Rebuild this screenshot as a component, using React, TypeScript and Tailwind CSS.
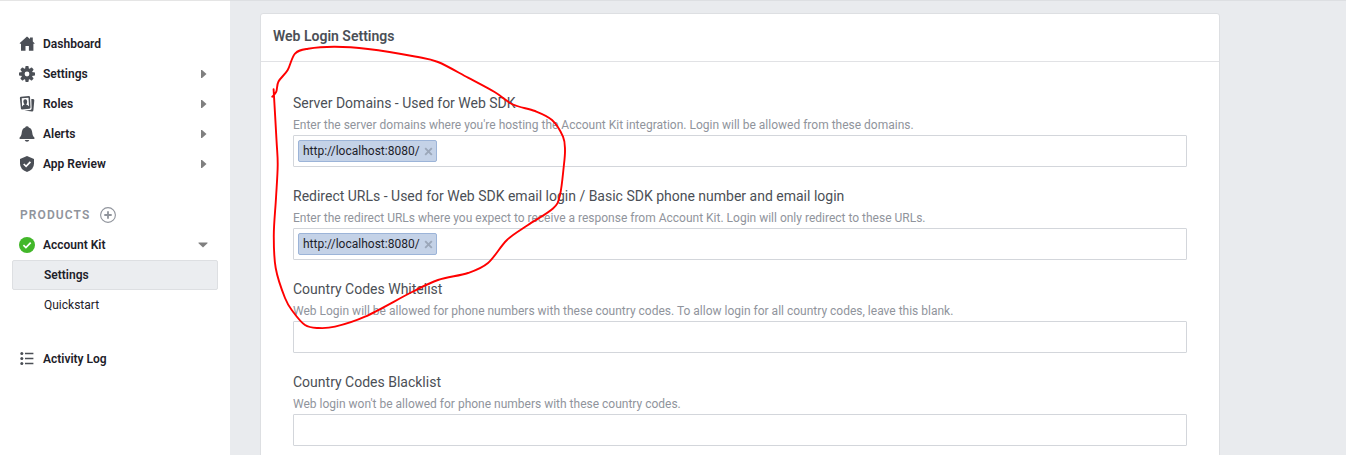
import type { ReactNode } from 'react';

const HomeIcon = () => (
  <svg width="16" height="16" viewBox="0 0 16 16" fill="#4b4f56">
    <path d="M8 0.4 11 3V1.4h2.8v4L15.6 7.2v.6h-1.200v7H9.900V10H6.500v4.800H2V7.800H.8v-.7z" />
  </svg>
);

const GearIcon = () => (
  <svg width="16" height="16" viewBox="0 0 16 16">
    <g fill="#4b4f56">
      <rect x="6.3" y="0" width="3.4" height="16" rx="0.9" />
      <rect x="6.3" y="0" width="3.4" height="16" rx="0.9" transform="rotate(45 8 8)" />
      <rect x="6.3" y="0" width="3.4" height="16" rx="0.9" transform="rotate(90 8 8)" />
      <rect x="6.3" y="0" width="3.4" height="16" rx="0.9" transform="rotate(135 8 8)" />
      <circle cx="8" cy="8" r="5.9" />
    </g>
    <circle cx="8" cy="8" r="2.4" fill="#fff" />
  </svg>
);

const RolesIcon = () => (
  <svg width="16" height="16" viewBox="0 0 16 16">
    <path d="M2 .7 9.800 0q1.100 0 1.200 1l.5 10.600q0 1.100-1 1.200l-7.500.7q-1 0-1.100-1L.9 1.900Q.9.800 2 .7z" fill="#4b4f56" />
    <path d="M2.700 2.200 9.500 1.700l.5 8.600-1.600-1.300-1.300-.6q1.200-1 1.100-2.900Q8 3.200 6.200 3.300 4.300 3.400 4.300 5.500q.1 2 1.300 3L4.300 9.100l-1.200 1.700z" fill="#fff" />
    <path d="M12.300 3h1.800q1.300.2 1.200 1.300l-.9 10q-.2 1.400-1.400 1.300l-7.600-1 5.800-.5q1.400-.2 1.400-1.600z" fill="#4b4f56" />
  </svg>
);

const BellIcon = () => (
  <svg width="16" height="16" viewBox="0 0 16 16" fill="#4b4f56">
    <path d="M8 .2Q9.500.2 9.800 1.500c2.500.8 3.300 3 3.500 5.400.2 2.200 1 3.400 2.100 4.700v1.500H.6v-1.500C1.700 10.300 2.500 9.100 2.700 6.900c.2-2.400 1-4.600 3.500-5.400Q6.500.2 8 .2zM5.700 14h4.600Q9.800 15.700 8 15.700T5.700 14z" />
  </svg>
);

const ShieldIcon = () => (
  <svg width="16" height="16" viewBox="0 0 16 16">
    <path d="M8 .1 15 3v4.500q0 6-7 8.400Q1 13.500 1 7.500V3z" fill="#4b4f56" />
    <path d="m4.700 8 2.400 2.300 4.300-4.500" fill="none" stroke="#fff" strokeWidth="1.700" />
  </svg>
);

const CheckIcon = () => (
  <svg width="16" height="16" viewBox="0 0 16 16">
    <circle cx="8" cy="8" r="8" fill="#42b72a" />
    <path d="m4.400 8.200 2.500 2.400 4.800-4.900" fill="none" stroke="#fff" strokeWidth="1.700" />
  </svg>
);

const ListIcon = () => (
  <svg width="16" height="16" viewBox="0 0 16 16">
    <g fill="#4b4f56">
      <circle cx="2.800" cy="2.500" r="1.500" />
      <circle cx="2.800" cy="7.500" r="1.500" />
      <circle cx="2.800" cy="12.500" r="1.500" />
      <path d="M6 1.800h8.400v1.400H6zM6 6.800h8.400v1.400H6zM6 11.800h8.400v1.400H6z" />
    </g>
  </svg>
);

const PlusIcon = () => (
  <svg width="16" height="16" viewBox="0 0 16 16" fill="none">
    <circle cx="8" cy="8" r="7.400" stroke="#90949c" strokeWidth="1.100" />
    <path d="M8 4.300v7.400M4.300 8h7.400" stroke="#90949c" strokeWidth="1.800" />
  </svg>
);

const RightArrow = () => (
  <svg className="ml-auto mr-[11px]" width="6" height="8" viewBox="0 0 6 8">
    <path d="M0 0h1l4.500 4L1 8H0z" fill="#7f7f7f" />
  </svg>
);

const DownArrow = () => (
  <svg className="ml-auto mr-2.5" width="10" height="6" viewBox="0 0 10 6">
    <path d="M.5.500h9v.8L5 5.500.5 1.300z" fill="#7f7f7f" />
  </svg>
);

function NavRow({ icon, label, arrow }: { icon: ReactNode; label: string; arrow?: ReactNode }) {
  return (
    <div className="flex h-[30px] items-center pl-[7px]">
      {icon}
      <span className="ml-2 font-semibold">{label}</span>
      {arrow}
    </div>
  );
}

function Tag({ text }: { text: string }) {
  return (
    <span className="flex h-[22px] w-[139px] items-center rounded-[2px] border border-[#9cb4d8] bg-[#c4d2e7] pl-1 text-[12px] leading-4 text-[#1d2129]">
      {text}
      <svg className="ml-1" width="9" height="9" viewBox="0 0 9 9">
        <path d="m1.200 1.200 6.600 6.600m0-6.600L1.200 7.800" stroke="#9ba7b9" strokeWidth="1.900" />
      </svg>
    </span>
  );
}

function Field({ label, hint, tag }: { label: string; hint: string; tag?: string }) {
  return (
    <div className="h-[93px]">
      <div className="h-6 text-[14px] leading-5 text-[#4b4f56]">{label}</div>
      <div className="h-[18px] text-[12px] leading-4 text-[#90949c]">{hint}</div>
      <div className="flex h-8 items-center rounded-[1px] border border-[#d3d6db] pl-1">{tag && <Tag text={tag} />}</div>
    </div>
  );
}

const strokePoints: [number, number][] = [
  [272.3, 96.7], [276.3, 91.7], [278.5, 81.5], [287.7, 70], [295, 53.6], [308, 48.7], [335, 46.7], [368, 49],
  [415, 56.5], [438, 62], [468, 77.7], [495, 92.3], [513, 104.5], [535, 111], [552, 120], [563, 136.7],
  [565, 150], [563.8, 166], [560, 195], [553, 208.5], [528, 225], [507, 240], [488, 263], [468, 273],
  [438, 280], [412, 292], [365, 316.7], [335, 326.7], [318, 328], [305, 325], [293, 311.7], [285, 298],
  [275.7, 268], [273.8, 235], [276, 198], [277.7, 165], [276.5, 140], [273.6, 89.3],
];

function smoothPath(pts: [number, number][]) {
  let d = `M${pts[0][0]} ${pts[0][1]}`;
  for (let i = 0; i < pts.length - 1; i++) {
    const a = pts[Math.max(0, i - 1)];
    const b = pts[i];
    const c = pts[i + 1];
    const e = pts[Math.min(pts.length - 1, i + 2)];
    d += `C${b[0] + (c[0] - a[0]) / 6} ${b[1] + (c[1] - a[1]) / 6} ${c[0] - (e[0] - b[0]) / 6} ${c[1] - (e[1] - b[1]) / 6} ${c[0]} ${c[1]}`;
  }
  return d;
}

export default function App() {
  return (
    <div className="relative flex h-[455px] w-[1346px] overflow-hidden bg-[#e9ebee] font-[Roboto,sans-serif] text-[12px] text-[#1d2129]">
      <nav className="w-[230px] shrink-0 border-t border-[#e5e5e5] bg-white px-3 pt-7">
        <NavRow icon={<HomeIcon />} label="Dashboard" />
        <NavRow icon={<GearIcon />} label="Settings" arrow={<RightArrow />} />
        <NavRow icon={<RolesIcon />} label="Roles" arrow={<RightArrow />} />
        <NavRow icon={<BellIcon />} label="Alerts" arrow={<RightArrow />} />
        <NavRow icon={<ShieldIcon />} label="App Review" arrow={<RightArrow />} />
        <div className="mt-5 flex h-[31px] items-center pl-2">
          <span className="w-20 font-semibold tracking-[1.1px] text-[#90949c]">PRODUCTS</span>
          <PlusIcon />
        </div>
        <NavRow icon={<CheckIcon />} label="Account Kit" arrow={<DownArrow />} />
        <div className="flex h-[30px] items-center rounded-[2px] border border-[#dddfe2] bg-[#ebedf0] pl-[31px] font-semibold">Settings</div>
        <div className="flex h-[30px] items-center pl-8">Quickstart</div>
        <div className="mt-6">
          <NavRow icon={<ListIcon />} label="Activity Log" />
        </div>
      </nav>
      <main className="flex-1 border-t border-[#dddfe2] pl-[30px] pt-3">
        <section className="h-[500px] w-[960px] rounded-[3px] border border-[#dddfe2] bg-white">
          <h2 className="flex h-12 items-center border-b border-[#e1e2e5] pb-0.5 pl-3 text-[14px] font-semibold text-[#4b4f56]">Web Login Settings</h2>
          <div className="px-8 pt-[31px]">
            <Field
              label="Server Domains - Used for Web SDK"
              hint="Enter the server domains where you're hosting the Account Kit integration. Login will be allowed from these domains."
              tag="http://localhost:8080/"
            />
            <Field
              label="Redirect URLs - Used for Web SDK email login / Basic SDK phone number and email login"
              hint="Enter the redirect URLs where you expect to receive a response from Account Kit. Login will only redirect to these URLs."
              tag="http://localhost:8080/"
            />
            <Field
              label="Country Codes Whitelist"
              hint="Web Login will be allowed for phone numbers with these country codes. To allow login for all country codes, leave this blank."
            />
            <Field label="Country Codes Blacklist" hint="Web login won't be allowed for phone numbers with these country codes." />
          </div>
        </section>
      </main>
      <svg className="pointer-events-none absolute left-0 top-0" width="1346" height="455" viewBox="0 0 1346 455">
        <path d={smoothPath(strokePoints)} fill="none" stroke="#ff0000" strokeWidth="1.900" strokeLinecap="round" strokeLinejoin="round" />
      </svg>
    </div>
  );
}
